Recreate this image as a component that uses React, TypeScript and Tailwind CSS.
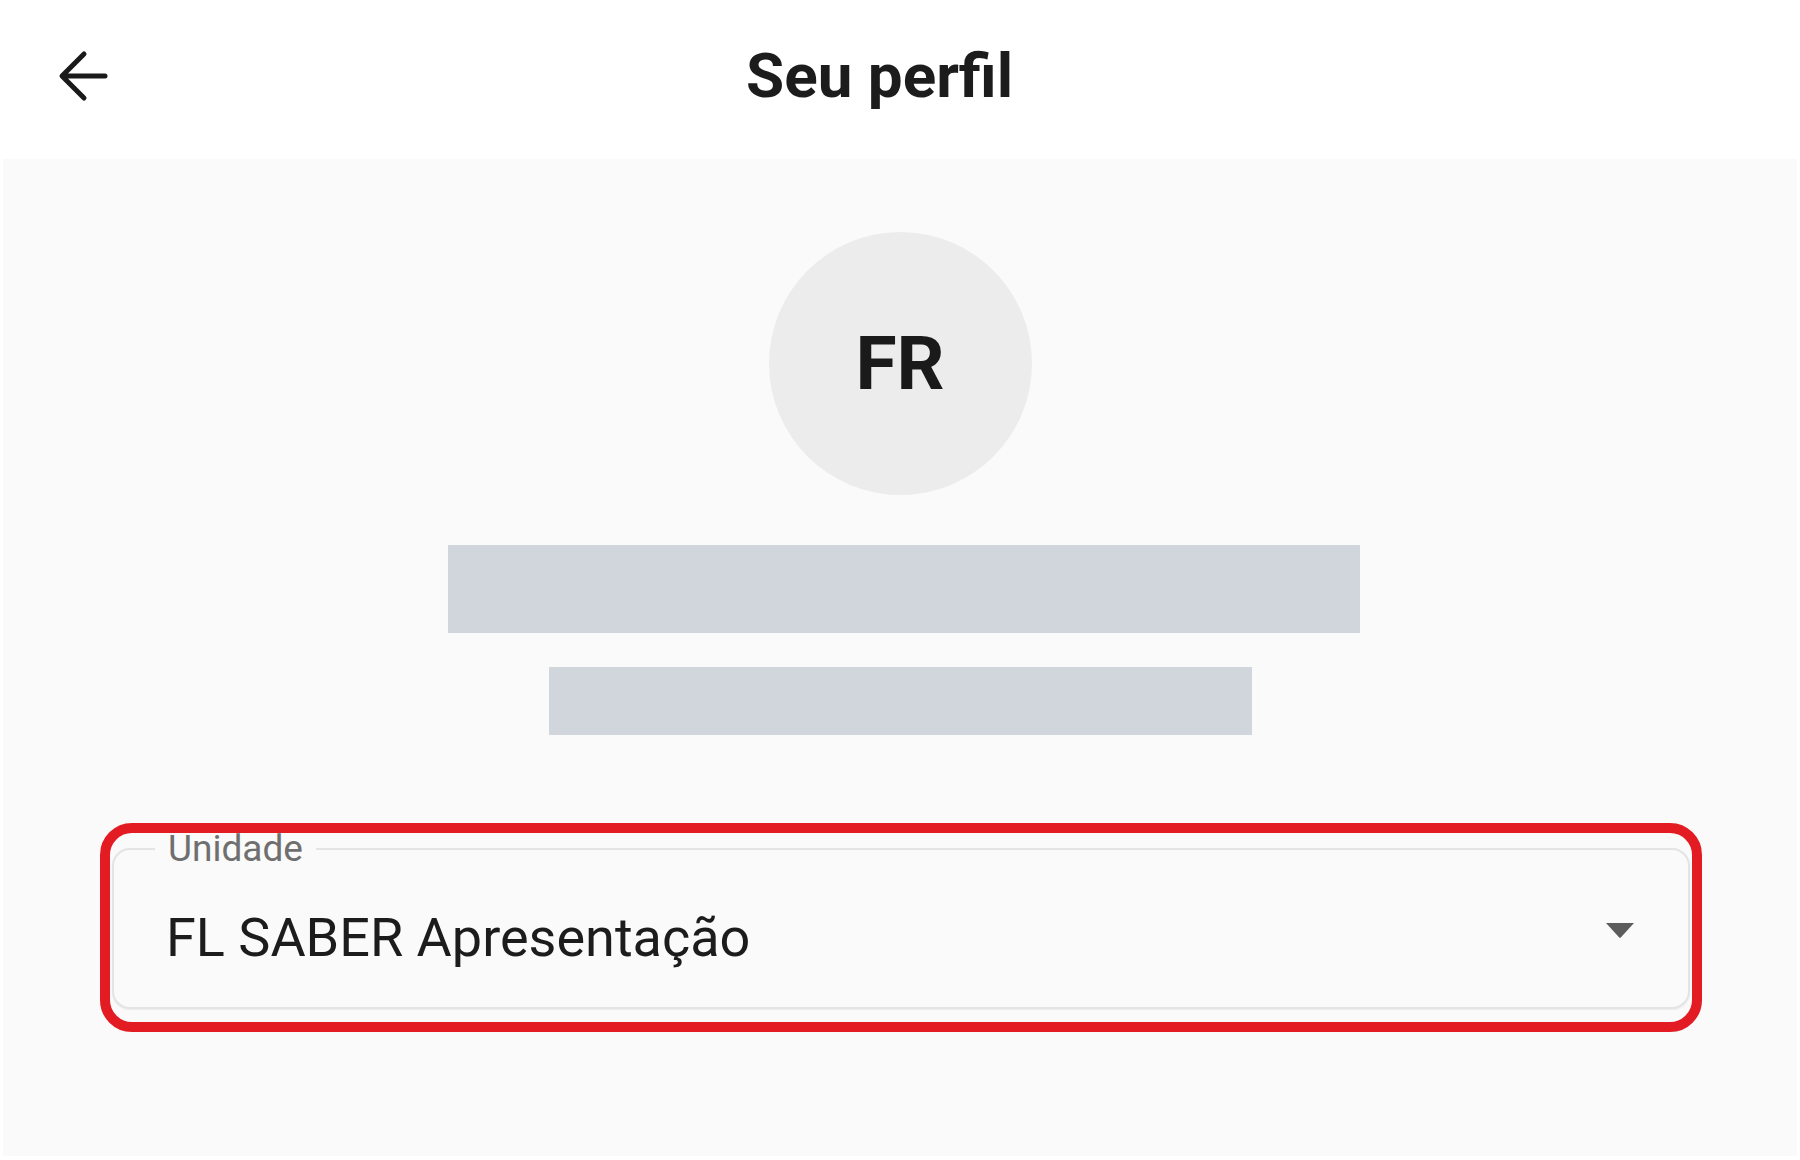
import React from "react";

function BackArrow() {
  return (
    <svg viewBox="0 0 60 60" className="h-[60px] w-[60px]" fill="none">
      <path
        d="M51 30H9M30 8L8 30l22 22"
        stroke="#1a1a1a"
        strokeWidth="5"
        strokeLinecap="round"
        strokeLinejoin="round"
      />
    </svg>
  );
}

function DropTriangle() {
  return (
    <svg viewBox="0 0 28 15" className="mt-[12px] h-[15px] w-[28px]">
      <path d="M0 0h28L15 14.2a1.4 1.4 0 0 1-2 0z" fill="#5c5c5c" />
    </svg>
  );
}

export default function App() {
  return (
    <div className="min-h-[1160px] w-full bg-white font-['Roboto',sans-serif]">
      <header className="flex h-[159px] items-center bg-white pb-[7px] pl-[54px]">
        <BackArrow />
        <h1 className="ml-[632px] text-[62px] leading-none font-bold text-[#1c1c1c]">
          Seu perfil
        </h1>
      </header>

      <main className="mx-[3px] flex h-[997px] flex-col items-center bg-[#fafafa] pt-[73px]">
        <div className="flex h-[263px] w-[263px] items-center justify-center rounded-full bg-[#ececec]">
          <span className="text-[75px] leading-none font-bold text-[#1a1a1a]">FR</span>
        </div>

        <div className="mt-[50px] ml-[8px] h-[88px] w-[912px] bg-[#d1d5dc]" />
        <div className="mt-[34px] h-[68px] w-[703px] bg-[#d1d5dc]" />

        <div className="mt-[88px] mr-[95px] ml-[97px] self-stretch rounded-[32px] border-[10px] border-[#e31b23] px-[2px] pt-[15px] pb-[13px]">
          <div className="relative h-[161px] rounded-[18px] border-2 border-[#e4e4e4] bg-[#fafafa] shadow-[0_1px_2px_rgba(0,0,0,0.06)]">
            <span className="absolute top-[-20px] left-[41px] bg-[linear-gradient(to_bottom,transparent_35%,#fafafa_35%,#fafafa_70%,transparent_70%)] px-[13px] text-[37px] leading-none text-[#6f6f6f]">
              Unidade
            </span>
            <div className="flex items-start justify-between pt-[61px] pr-[54px] pl-[52px]">
              <span className="text-[54px] leading-none text-[#1c1c1c]">
                FL SABER Apresentação
              </span>
              <DropTriangle />
            </div>
          </div>
        </div>
      </main>
    </div>
  );
}
